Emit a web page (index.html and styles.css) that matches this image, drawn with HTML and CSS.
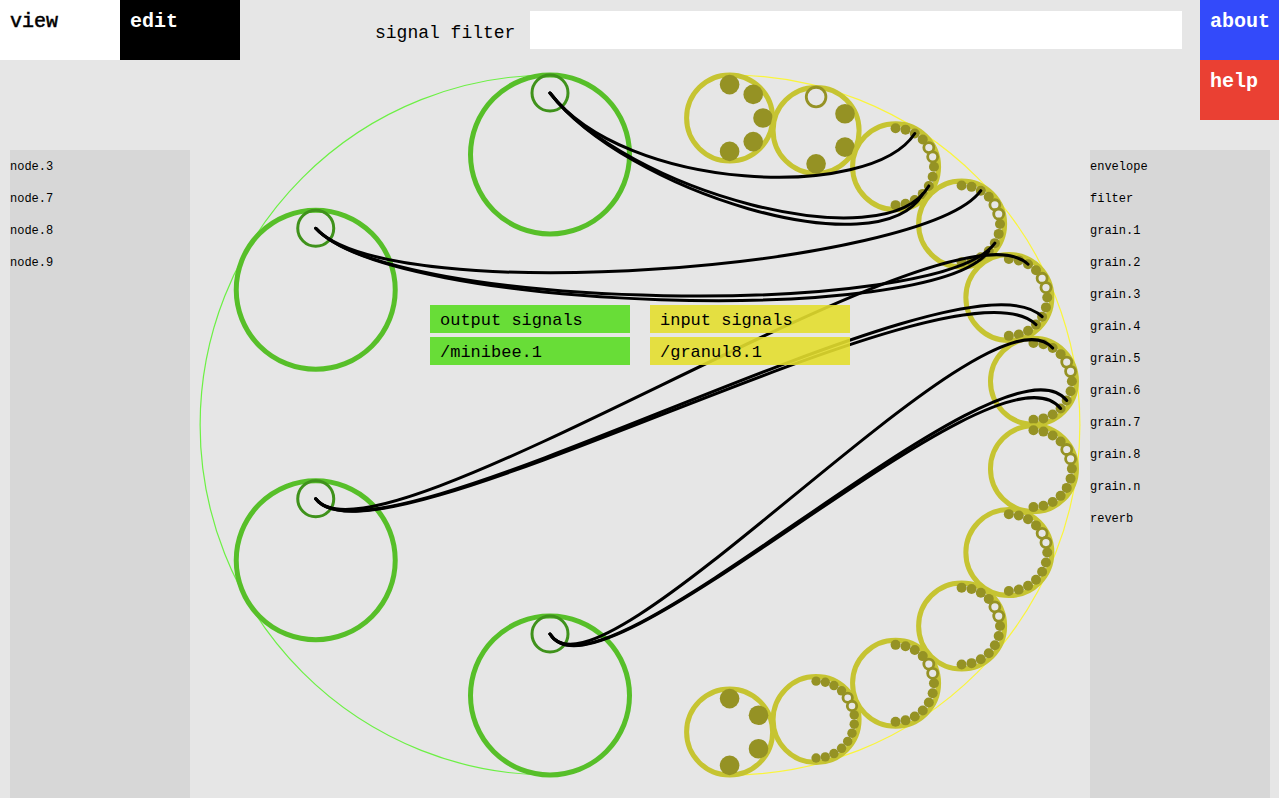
FILE: index.html
```html
<!DOCTYPE html>
<html lang="en">
<head>
<meta charset="utf-8">
<title>signal mapper</title>
<link rel="stylesheet" href="styles.css">
</head>
<body>
<header class="topbar">
  <nav class="modes">
    <button class="tab tab-view" type="button">view</button>
    <button class="tab tab-edit" type="button">edit</button>
  </nav>
  <form class="filter">
    <label class="filter-label" for="signal-filter">signal filter</label>
    <input class="filter-input" id="signal-filter" type="text">
  </form>
  <nav class="info">
    <button class="tab tab-about" type="button">about</button>
    <button class="tab tab-help" type="button">help</button>
  </nav>
</header>
<main class="workspace">
  <aside class="sidebar">
    <ul class="names">
      <li>node.3</li><li>node.7</li><li>node.8</li><li>node.9</li>
    </ul>
  </aside>
  <section class="stage">
    <svg class="graph" id="graph" viewBox="190 60 900 738" role="img" aria-label="signal connections"></svg>
    <div class="signals">
      <div class="signal-column outputs">
        <h2 class="signal">output signals</h2>
        <button class="signal" type="button">/minibee.1</button>
      </div>
      <div class="signal-column inputs">
        <h2 class="signal">input signals</h2>
        <button class="signal" type="button">/granul8.1</button>
      </div>
    </div>
  </section>
  <aside class="sidebar">
    <ul class="names">
      <li>envelope</li><li>filter</li><li>grain.1</li><li>grain.2</li><li>grain.3</li><li>grain.4</li>
      <li>grain.5</li><li>grain.6</li><li>grain.7</li><li>grain.8</li><li>grain.n</li><li>reverb</li>
    </ul>
  </aside>
</main>
<script src="graph.js"></script>
</body>
</html>
```
FILE: styles.css
```css
* { box-sizing: border-box; }

body {
  margin: 0;
  min-height: 100vh;
  display: flex;
  flex-direction: column;
  background: #e6e6e6;
  color: #000;
  font-family: "Courier New", "Liberation Mono", monospace;
  overflow-x: hidden;
}

button, input, h2 {
  margin: 0;
  border: 0;
  border-radius: 0;
  font: inherit;
  color: inherit;
}

button { cursor: pointer; text-align: left; }

.topbar {
  display: flex;
  height: 60px;
  align-items: flex-start;
}

.modes { display: flex; }

.tab {
  display: flex;
  align-items: flex-start;
  width: 120px;
  height: 60px;
  padding: 10px;
  font-size: 20px;
  line-height: 24px;
  font-weight: bold;
}

.tab-view { background: #fff; font-weight: normal; -webkit-text-stroke: 0.5px #000; }
.tab-edit { background: #000; color: #fff; }
.tab-about { background: #334afa; color: #fff; }
.tab-help { background: #ea4033; color: #fff; }

.info {
  display: flex;
  flex-direction: column;
}

.info .tab { width: 79px; }

.filter {
  flex: 1;
  display: flex;
  align-items: center;
  height: 60px;
  padding: 0 18px 0 135px;
}

.filter-label {
  flex: 0 0 155px;
  padding-top: 6px;
  font-size: 18px;
  line-height: 20px;
}

.filter-input {
  flex: 1;
  min-width: 0;
  height: 38px;
  padding: 0 10px;
  background: #fff;
  font-size: 18px;
}

.workspace {
  flex: 1;
  display: grid;
  grid-template-columns: 180px minmax(0, 1fr) 180px;
  padding: 0 9px 0 10px;
}

.sidebar {
  margin-top: 90px;
  background: #d7d7d7;
}

.names {
  margin: 0;
  padding: 1px 0 0;
  list-style: none;
  font-size: 12px;
  line-height: 32px;
}

.stage { position: relative; }

.graph { display: block; width: 100%; }

.signals {
  position: absolute;
  top: 245px;
  left: 0;
  right: 0;
  display: flex;
  justify-content: center;
  gap: 20px;
}

.signal-column {
  display: flex;
  flex-direction: column;
  gap: 4px;
  width: 200px;
}

.signal {
  padding: 6px 10px 2px;
  font-size: 17px;
  font-weight: normal;
  line-height: 20px;
}

.outputs .signal { background: rgba(90, 220, 36, 0.9); }
.inputs .signal { background: rgba(227, 222, 47, 0.9); }

.orbit { fill: none; stroke-width: 1.2; }
.orbit-out { stroke: #6cf044; }
.orbit-in { stroke: #faf53c; }
.node { fill: none; stroke-width: 5; }
.node-out { stroke: #57bf29; }
.node-in { stroke: #c6c432; }
.port-out { fill: none; stroke: #3f921b; stroke-width: 3; }
.port { fill: #959224; }
.port-open { fill: #e6e6e6; stroke: #959224; stroke-width: 2.8; }
.wire { fill: none; stroke: #000; stroke-width: 3; stroke-linecap: round; }
```
FILE: graph.js
```js
const svg = document.getElementById('graph');

function add(tag, cls, attrs) {
  const el = document.createElementNS('http://www.w3.org/2000/svg', tag);
  el.setAttribute('class', cls);
  for (const k in attrs) el.setAttribute(k, attrs[k]);
  svg.appendChild(el);
}

function circle(cls, p, r) {
  add('circle', cls, { cx: p[0], cy: p[1], r: r });
}

// Point k of n, spread over a half turn from top to bottom; side is 1 (right) or -1 (left).
function spread(c, radius, k, n, side) {
  const a = Math.PI * k / (n - 1);
  return [c[0] + side * radius * Math.sin(a), c[1] - radius * Math.cos(a)];
}

add('path', 'orbit orbit-out', { d: 'M550 75A350 350 0 0 0 550 775' });
add('path', 'orbit orbit-in', { d: 'M730 75A350 350 0 0 1 730 775' });

const outs = [];
for (let i = 0; i < 4; i++) {
  const c = spread([550, 425], 270.5, i, 4, -1);
  const port = [c[0], c[1] - 61.5];
  circle('node node-out', c, 79.5);
  circle('port-out', port, 18);
  outs.push(port);
}

const counts = [5, 4, 13, 13, 13, 13, 13, 13, 13, 13, 14, 4];
const ins = counts.map((n, i) => {
  const c = spread([729.6, 425], 307, i, 12, 1);
  const r = n > 12 ? (n === 14 ? 4.7 : 5) : 9.8;
  const radius = n > 12 ? 38.4 : 33.4;
  circle('node node-in', c, 43);
  const ports = [];
  for (let k = 0; k < n; k++) {
    const p = spread(c, radius, k, n, 1);
    const open = n > 12 ? (k === 4 || k === 5) : (i === 1 && k === 0);
    circle(open ? 'port-open' : 'port', p, r);
    ports.push(p);
  }
  return ports;
});

// out port, in node, in port, start handle, end handle
const wires = [
  [0, 2, 2, [76, 99], [-44, 68]],
  [0, 2, 8, [76, 98], [-44, 76]],
  [0, 2, 9, [76, 98], [-44, 76]],
  [1, 3, 2, [76, 82], [-55, 77]],
  [1, 3, 8, [76, 83], [-55, 77]],
  [1, 3, 9, [76, 83], [-55, 77]],
  [2, 4, 2, [60, 80], [-78, -75]],
  [2, 4, 8, [60, 80], [-80, -79]],
  [2, 4, 9, [60, 80], [-80, -79]],
  [3, 5, 2, [50, 83], [-65, -75]],
  [3, 5, 8, [50, 83], [-64, -80]],
  [3, 5, 9, [50, 83], [-64, -80]]
];
wires.forEach(([o, i, k, h1, h2]) => {
  const a = outs[o], b = ins[i][k];
  add('path', 'wire', {
    d: `M${a[0]} ${a[1]}C${a[0] + h1[0]} ${a[1] + h1[1]} ${b[0] + h2[0]} ${b[1] + h2[1]} ${b[0]} ${b[1]}`
  });
});
```
